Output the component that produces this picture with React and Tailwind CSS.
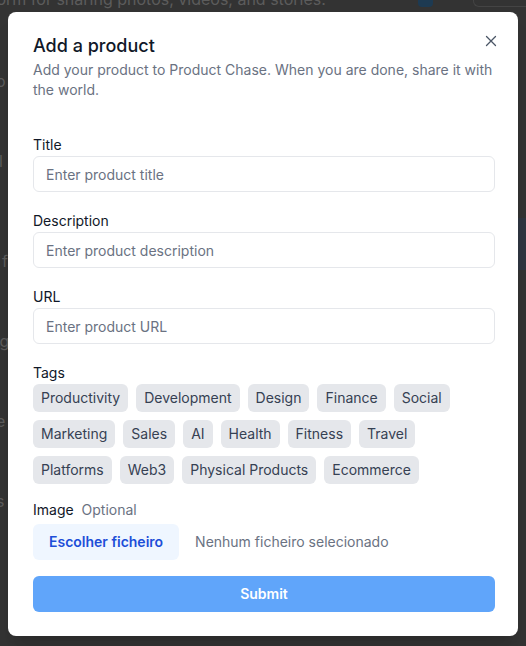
import React from 'react';

const TAG_ROWS = [
  ['Productivity', 'Development', 'Design', 'Finance', 'Social'],
  ['Marketing', 'Sales', 'AI', 'Health', 'Fitness', 'Travel'],
  ['Platforms', 'Web3', 'Physical Products', 'Ecommerce'],
];

const Field = ({ label, placeholder }) => (
  <div>
    <label className="block h-5 text-sm leading-5 text-gray-900">{label}</label>
    <input
      placeholder={placeholder}
      className="mt-px block h-9 w-full rounded-md border border-gray-200 px-3 text-sm text-gray-900 placeholder:text-gray-500 outline-none"
    />
  </div>
);

export default function App() {
  return (
    <div className="relative h-[646px] w-full overflow-hidden bg-[#333333]" style={{ fontFamily: 'Inter, "Noto Sans", sans-serif' }}>
      {/* page behind the overlay */}
      <div className="flex h-[7px] items-start whitespace-nowrap">
        <p className="-mt-[13px] -ml-[9px] shrink-0 text-base text-[#5c5c5c]">form for sharing photos, videos, and stories.</p>
        <div className="ml-[92px] h-[7px] w-[15px] shrink-0 rounded-b-sm bg-[#1d3a52]" />
        <div className="ml-[40px] h-[7px] w-[80px] shrink-0 rounded-bl-md border-b border-l border-[#444]" />
      </div>
      <div className="-ml-[4px] flex flex-col text-base leading-6 text-[#5c5c5c]">
        <span className="mt-[62px]">o</span>
        <span className="mt-[56px] -ml-[6px]">al</span>
        <span className="mt-[76px] ml-[6px]">f</span>
        <span className="mt-[56px] -ml-[6px]">ng</span>
        <span className="mt-[56px]">e</span>
        <span className="mt-[56px]">s</span>
      </div>

      {/* overlay + modal */}
      <div className="absolute inset-0 flex items-center justify-center">
        <div className="absolute right-0 top-[218px] h-[52px] w-[10px] bg-[#2f3540]" />
        <div className="relative mt-[2px] w-[510px] rounded-lg bg-white pl-[25px] pr-[23px] pt-[20px] pb-[24px] shadow-xl">
          <button className="absolute right-[17px] top-[19px] flex h-5 w-5 items-center justify-center text-gray-600">
            <svg width="12" height="12" viewBox="0 0 12 12" fill="none" stroke="currentColor" strokeWidth="1.3" strokeLinecap="round">
              <path d="M1.5 1.5l9 9M10.5 1.5l-9 9" />
            </svg>
          </button>

          <h2 className="text-lg font-medium leading-7 text-gray-900">Add a product</h2>
          <p className="text-sm leading-5 text-gray-500">
            Add your product to Product Chase. When you are done, share it with the world.
          </p>

          <div className="mt-[35px] flex flex-col gap-[19px]">
            <Field label="Title" placeholder="Enter product title" />
            <Field label="Description" placeholder="Enter product description" />
            <Field label="URL" placeholder="Enter product URL" />
            <div>
              <div className="h-5 text-sm leading-5 text-gray-900">Tags</div>
              <div className="mt-px flex flex-col gap-2">
                {TAG_ROWS.map((row, i) => (
                  <div key={i} className="flex gap-2">
                    {row.map((tag) => (
                      <span key={tag} className="flex h-7 items-center rounded-md bg-gray-200 px-2 text-sm text-gray-700">
                        {tag}
                      </span>
                    ))}
                  </div>
                ))}
              </div>
            </div>
          </div>

          <div className="mt-4">
            <div className="h-5 text-sm leading-5 text-gray-900">
              Image <span className="ml-1 text-gray-500">Optional</span>
            </div>
            <div className="mt-1 flex items-center">
              <span className="flex h-9 items-center rounded-md bg-[#eff6ff] px-4 text-sm font-semibold text-[#1d4ed8]">
                Escolher ficheiro
              </span>
              <span className="ml-4 text-sm text-gray-500">Nenhum ficheiro selecionado</span>
            </div>
          </div>

          <button className="mt-4 flex h-9 w-full items-center justify-center rounded-md bg-[#60a5fa] text-sm font-semibold text-white">
            Submit
          </button>
        </div>
      </div>
    </div>
  );
}
